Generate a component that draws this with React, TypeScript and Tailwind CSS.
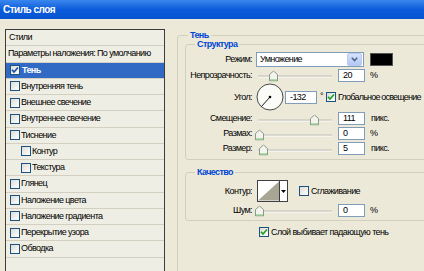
import React from "react";

const FONT = "[font-family:'Liberation_Sans',Arial,sans-serif]";

function CheckBox({ checked = false, onBlue = false }: { checked?: boolean; onBlue?: boolean }) {
  return (
    <span className="flex h-[10px] w-[10px] shrink-0 items-center justify-center border border-[#1c5180] bg-gradient-to-br from-[#dcdcd6] to-white">
      {checked && (
        <svg width="8" height="8" viewBox="0 0 8 8">
          <path
            d="M1 3.8 L3 6 L7 1.5"
            fill="none"
            stroke={onBlue ? "#1d4fa3" : "#21a121"}
            strokeWidth="1.7"
          />
        </svg>
      )}
    </span>
  );
}

function Slider({ thumb }: { thumb: number }) {
  return (
    <div className="relative h-[12px] w-[77px] shrink-0 translate-y-[1.5px]">
      <div className="absolute left-[2px] right-[1px] top-[5px] h-[2px] border-t border-[#b5b3a3] bg-white" />
      <svg
        className="absolute top-[0px]"
        style={{ left: thumb }}
        width="9"
        height="11"
        viewBox="0 0 9 11"
      >
        <path d="M0.5 4 L4.5 0.5 L8.5 4 L8.5 10.5 L0.5 10.5 Z" fill="#f4f4ef" stroke="#8c9a8c" />
        <path d="M1 9.5 L8 9.5" stroke="#6cc46c" />
      </svg>
    </div>
  );
}

function NumBox({ value, w = "w-[27px]" }: { value: string; w?: string }) {
  return (
    <div className={`flex h-[13px] shrink-0 items-center border border-[#7f9db9] bg-white pl-[4px] ${w}`}>
      {value}
    </div>
  );
}

function Label({ children }: { children: React.ReactNode }) {
  return <span className="w-[66px] shrink-0 whitespace-nowrap text-right">{children}</span>;
}

const styles = [
  { name: "Внутренняя тень" },
  { name: "Внешнее свечение" },
  { name: "Внутреннее свечение" },
  { name: "Тиснение" },
  { name: "Контур", sub: true },
  { name: "Текстура", sub: true },
  { name: "Глянец" },
  { name: "Наложение цвета" },
  { name: "Наложение градиента" },
  { name: "Перекрытие узора" },
  { name: "Обводка" },
];

export default function App() {
  return (
    <div className={`flex h-[271px] w-[424px] flex-col overflow-hidden bg-[#ece9d8] text-[9px] leading-none tracking-[-0.6px] text-black ${FONT}`}>
      {/* Title bar */}
      <div className="flex h-[19px] shrink-0 items-center bg-gradient-to-b from-[#3a87ee] via-[#0b5bdb] to-[#0855d2] pl-[3px] text-[10px] font-bold tracking-[-0.5px] text-white">
        Стиль слоя
      </div>

      <div className="flex min-h-0 flex-1">
        {/* Styles list */}
        <div className="w-[165px] shrink-0 pl-[5px] pt-[10px]">
          <div className="h-[260px] border border-[#3c3c3c] bg-[#efeee4]">
            <div className="flex h-[16.25px] items-center border-b border-[#d3d0c2] pl-[3px]">Стили</div>
            <div className="flex h-[16.25px] items-center whitespace-nowrap border-b border-[#d3d0c2] pl-[2px]">
              Параметры наложения: По умолчанию
            </div>
            <div className="flex h-[16.25px] items-center border-b border-[#d3d0c2] bg-[#316ac5] pl-[4px] font-bold text-white">
              <CheckBox checked onBlue />
              <span className="ml-[2px]">Тень</span>
            </div>
            {styles.map((s) => (
              <div
                key={s.name}
                className={`flex h-[16.25px] items-center border-b border-[#d3d0c2] ${s.sub ? "pl-[15px]" : "pl-[4px]"}`}
              >
                <CheckBox />
                <span className="ml-[1px]">{s.name}</span>
              </div>
            ))}
          </div>
        </div>

        {/* Settings */}
        <div className="ml-[12px] pt-[11px]">
          <fieldset className="w-[262px] rounded-[3px] border border-[#d0d0bf] pb-[40px]">
            <legend className="ml-[10px] px-[2px] font-bold leading-[10px] text-[#0046d5]">Тень</legend>

            {/* Структура */}
            <fieldset className="ml-[7px] mr-[8px] rounded-[3px] border border-[#d0d0bf] pb-[3px]">
              <legend className="ml-[9px] px-[2px] font-bold leading-[8px] text-[#0046d5]">Структура</legend>

              <div className="mt-[3px] flex h-[16px] items-center">
                <Label>Режим:</Label>
                <div className="ml-[4px] flex h-[15px] w-[108px] items-center border border-[#7f9db9] bg-white pl-[3px]">
                  <span className="flex-1">Умножение</span>
                  <span className="mr-[1px] flex h-[13px] w-[15px] items-center justify-center rounded-[2px] border border-[#b9cbf3] bg-gradient-to-b from-[#d6e2fd] to-[#b3c7f5]">
                    <svg width="7" height="5" viewBox="0 0 7 5">
                      <path d="M0.8 0.8 L3.5 3.6 L6.2 0.8" fill="none" stroke="#4d6185" strokeWidth="1.5" />
                    </svg>
                  </span>
                </div>
                <div className="ml-[6px] h-[13px] w-[23px] border border-[#555] bg-black" />
              </div>

              <div className="flex h-[16px] items-center">
                <Label>Непрозрачность:</Label>
                <div className="ml-[4px] flex items-center">
                  <Slider thumb={12.5} />
                  <div className="ml-[5px]">
                    <NumBox value="20" />
                  </div>
                  <span className="ml-[5px]">%</span>
                </div>
              </div>

              <div className="flex h-[28px] items-center">
                <Label>Угол:</Label>
                <svg className="ml-[4px] shrink-0" width="28" height="28" viewBox="0 0 28 28">
                  <circle cx="14" cy="14" r="13" fill="#fbfbf8" stroke="#4a4a4a" />
                  <path d="M14 14 L5.3 23.7" stroke="#1a1a1a" strokeWidth="1" />
                  <circle cx="14" cy="14" r="1.3" fill="#000" />
                </svg>
                <div className="ml-[1px]">
                  <NumBox value="-132" w="w-[32px]" />
                </div>
                <span className="ml-[3px] self-start pt-[9px]">°</span>
                <span className="ml-[3px]">
                  <CheckBox checked />
                </span>
                <span className="ml-[2px] whitespace-nowrap tracking-[-0.8px]">Глобальное освещение</span>
              </div>

              <div className="flex h-[15px] items-center">
                <Label>Смещение:</Label>
                <div className="ml-[4px] flex items-center">
                  <Slider thumb={53.5} />
                  <div className="ml-[5px]">
                    <NumBox value="111" />
                  </div>
                  <span className="ml-[6px]">пикс.</span>
                </div>
              </div>

              <div className="flex h-[15px] items-center">
                <Label>Размах:</Label>
                <div className="ml-[4px] flex items-center">
                  <Slider thumb={-1.5} />
                  <div className="ml-[5px]">
                    <NumBox value="0" />
                  </div>
                  <span className="ml-[5px]">%</span>
                </div>
              </div>

              <div className="flex h-[15px] items-center">
                <Label>Размер:</Label>
                <div className="ml-[4px] flex items-center">
                  <Slider thumb={3} />
                  <div className="ml-[5px]">
                    <NumBox value="5" />
                  </div>
                  <span className="ml-[6px]">пикс.</span>
                </div>
              </div>
            </fieldset>

            {/* Качество */}
            <fieldset className="ml-[7px] mr-[8px] mt-[8px] rounded-[3px] border border-[#d0d0bf] pb-[2px]">
              <legend className="ml-[9px] px-[2px] font-bold leading-[8px] text-[#0046d5]">Качество</legend>

              <div className="mt-[4px] flex h-[22px] items-center">
                <Label>Контур:</Label>
                <div className="ml-[5px] flex h-[22px] border border-[#404040] bg-white">
                  <svg width="22" height="20" viewBox="0 0 22 20" className="border-r border-[#404040]">
                    <rect width="22" height="20" fill="#ffffff" />
                    <path d="M0 20 L22 0 L22 20 Z" fill="#a9a594" />
                  </svg>
                  <span className="flex w-[7px] items-center justify-center">
                    <svg width="5" height="3" viewBox="0 0 5 3">
                      <path d="M0 0 L5 0 L2.5 3 Z" fill="#000" />
                    </svg>
                  </span>
                </div>
                <span className="ml-[11px]">
                  <CheckBox />
                </span>
                <span className="ml-[2px]">Сглаживание</span>
              </div>

              <div className="flex h-[16px] items-center">
                <Label>Шум:</Label>
                <div className="ml-[4px] flex items-center">
                  <Slider thumb={-1.5} />
                  <div className="ml-[5px]">
                    <NumBox value="0" />
                  </div>
                  <span className="ml-[5px]">%</span>
                </div>
              </div>
            </fieldset>

            <div className="ml-[81px] mt-[4px] flex h-[14px] items-center">
              <CheckBox checked />
              <span className="ml-[2px]">Слой выбивает падающую тень</span>
            </div>
          </fieldset>
        </div>
      </div>
    </div>
  );
}
